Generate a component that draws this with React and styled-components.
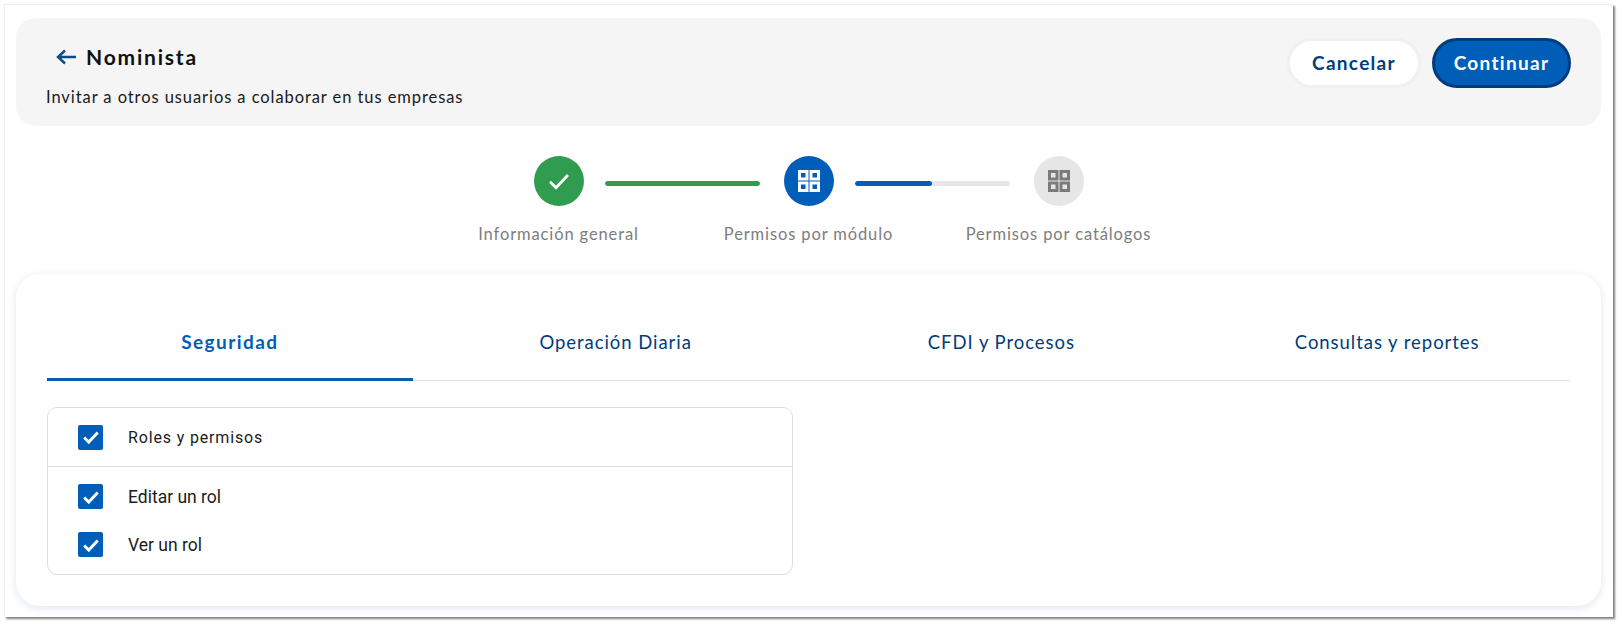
import React from "react";
import styled, { createGlobalStyle } from "styled-components";

const Global = createGlobalStyle`
  html, body { margin: 0; padding: 0; background: #fff; }
  body { width: 1622px; height: 626px; overflow: hidden; font-family: "Lato", "Liberation Sans", sans-serif; }
  * { box-sizing: border-box; }
`;

const Frame = styled.div`
  margin: 4px 0 0 4px;
  width: 1609px;
  height: 613px;
  padding: 13px 12px 11px 11px;
  background: #fff;
  border-top: 1px solid #ececec;
  border-left: 1px solid #ececec;
  box-shadow: 2px 2px 2px #808080;
  display: flex;
  flex-direction: column;
`;

const Header = styled.header`
  height: 108px;
  border-radius: 20px;
  background: #f5f5f5;
  display: flex;
  justify-content: space-between;
  padding: 20px 30px 0 30px;
`;

const HeaderText = styled.div`
  display: flex;
  flex-direction: column;
`;

const TitleRow = styled.div`
  display: flex;
  align-items: center;
  gap: 10px;
  height: 37px;
  padding-left: 10px;
`;

const Title = styled.h1`
  margin: 0;
  font-size: 21px;
  font-weight: 700;
  letter-spacing: 1.8px;
  color: #111;
`;

const Subtitle = styled.p`
  margin: 12px 0 0;
  font-size: 16.5px;
  line-height: 20px;
  letter-spacing: 0.92px;
  color: #1a1a1a;
`;

const Actions = styled.div`
  display: flex;
  gap: 11px;
`;

const Button = styled.button`
  height: 50px;
  width: ${p => p.$w}px;
  border-radius: 25px;
  border: 3px solid ${p => (p.$primary ? "#003d7c" : "#f0f0f0")};
  background: ${p => (p.$primary ? "#005eb8" : "#fff")};
  color: ${p => (p.$primary ? "#fff" : "#003d7c")};
  font-family: inherit;
  font-size: 19px;
  font-weight: 700;
  letter-spacing: 1.3px;
  padding: 0 0 2px;
`;

const Stepper = styled.div`
  height: 148px;
  padding-top: 30px;
  display: flex;
  flex-direction: column;
  align-items: center;
`;

const Track = styled.div`
  display: flex;
  align-items: center;
  gap: 21px;
`;

const Circle = styled.div`
  width: 50px;
  height: 50px;
  border-radius: 50%;
  background: ${p => p.$bg};
  display: flex;
  align-items: center;
  justify-content: center;
`;

const Bar = styled.div`
  width: 155px;
  height: 5px;
  margin: 5px 3px 0 0;
  border-radius: 3px;
  background: #e6e6e6;
  overflow: hidden;
`;

const BarFill = styled.div`
  height: 100%;
  border-radius: 3px;
  background: ${p => p.$color};
`;

const Labels = styled.div`
  position: relative;
  width: 700px;
  height: 24px;
  margin-top: 16px;
`;

const StepLabel = styled.span`
  position: absolute;
  top: 0;
  left: ${p => p.$x}px;
  transform: translateX(-50%);
  white-space: nowrap;
  font-size: 16.5px;
  line-height: 24px;
  letter-spacing: 0.88px;
  color: #7d7d7d;
`;

const Card = styled.section`
  flex: 1;
  border-radius: 24px;
  background: #fff;
  box-shadow: 0 2px 8px rgba(60, 100, 150, 0.16);
  padding: 0 31px;
  display: flex;
  flex-direction: column;
`;

const Tabs = styled.nav`
  display: grid;
  grid-template-columns: repeat(4, 1fr);
  column-gap: 20px;
  height: 107px;
  border-bottom: 1px solid #dedede;
`;

const Tab = styled.div`
  display: flex;
  align-items: center;
  justify-content: center;
  padding-top: 31px;
  margin-bottom: -1px;
  font-size: ${p => (p.$active ? 19 : 18.5)}px;
  letter-spacing: ${p => (p.$active ? 1.45 : 0.95)}px;
  font-weight: ${p => (p.$active ? 700 : 400)};
  color: ${p => (p.$active ? "#005eb8" : "#003d7c")};
  border-bottom: 3px solid ${p => (p.$active ? "#005eb8" : "transparent")};
`;

const ListBox = styled.div`
  width: 746px;
  height: 168px;
  margin-top: 26px;
  border: 1px solid #dedede;
  border-radius: 10px;
`;

const ListHead = styled.div`
  height: 59px;
  display: flex;
  align-items: center;
  padding-left: 30px;
  gap: 25px;
  border-bottom: 1px solid #dedede;
`;

const ListBody = styled.div`
  display: flex;
  flex-direction: column;
  gap: 23px;
  padding: 17px 0 0 30px;
`;

const Row = styled.div`
  display: flex;
  align-items: center;
  gap: 25px;
`;

const Check = styled.span`
  width: 25px;
  height: 25px;
  border-radius: 2px;
  background: #005eb8;
  display: flex;
  align-items: center;
  justify-content: center;
`;

const ItemLabel = styled.span`
  font-family: "Roboto", sans-serif;
  font-size: ${p => (p.$spaced ? 16 : 17.5)}px;
  letter-spacing: ${p => (p.$spaced ? "0.85px" : "0")};
  color: #1c1c1c;
`;

const Arrow = () => (
  <svg width="20" height="16" viewBox="0 0 20 16" fill="none" stroke="#0d4a82" strokeWidth="2.4">
    <path d="M20 8H2M9 1.5 2 8l7 6.5" />
  </svg>
);

const Tick = ({ size = 18, w = 2.6 }) => (
  <svg width={size} height={size} viewBox="0 0 16 16" fill="none" stroke="#fff" strokeWidth={w}>
    <path d="M2 8.5 6 12.5 14 4" />
  </svg>
);

const Grid = ({ color }) => (
  <svg width="24" height="24" viewBox="0 0 24 24" fill="none" stroke={color} strokeWidth="3">
    <rect x="2.5" y="2.5" width="7.5" height="7.5" />
    <rect x="14" y="2.5" width="7.5" height="7.5" />
    <rect x="2.5" y="14" width="7.5" height="7.5" />
    <rect x="14" y="14" width="7.5" height="7.5" />
  </svg>
);

const tabs = ["Seguridad", "Operación Diaria", "CFDI y Procesos", "Consultas y reportes"];
const items = ["Editar un rol", "Ver un rol"];

export default function App() {
  return (
    <>
      <Global />
      <Frame>
        <Header>
          <HeaderText>
            <TitleRow>
              <Arrow />
              <Title>Nominista</Title>
            </TitleRow>
            <Subtitle>Invitar a otros usuarios a colaborar en tus empresas</Subtitle>
          </HeaderText>
          <Actions>
            <Button $w={134}>Cancelar</Button>
            <Button $w={139} $primary>Continuar</Button>
          </Actions>
        </Header>
        <Stepper>
          <Track>
            <Circle $bg="#2f9c50"><Tick size={24} w={1.8} /></Circle>
            <Bar><BarFill $color="#2f9c50" style={{ width: "100%" }} /></Bar>
            <Circle $bg="#005eb8"><Grid color="#fff" /></Circle>
            <Bar><BarFill $color="#005eb8" style={{ width: "50%" }} /></Bar>
            <Circle $bg="#e6e6e6"><Grid color="#7b7b7b" /></Circle>
          </Track>
          <Labels>
            <StepLabel $x={100}>Información general</StepLabel>
            <StepLabel $x={350}>Permisos por módulo</StepLabel>
            <StepLabel $x={600}>Permisos por catálogos</StepLabel>
          </Labels>
        </Stepper>
        <Card>
          <Tabs>
            {tabs.map((t, i) => <Tab key={t} $active={i === 0}>{t}</Tab>)}
          </Tabs>
          <ListBox>
            <ListHead>
              <Check><Tick /></Check>
              <ItemLabel $spaced>Roles y permisos</ItemLabel>
            </ListHead>
            <ListBody>
              {items.map(t => (
                <Row key={t}>
                  <Check><Tick /></Check>
                  <ItemLabel>{t}</ItemLabel>
                </Row>
              ))}
            </ListBody>
          </ListBox>
        </Card>
      </Frame>
    </>
  );
}
